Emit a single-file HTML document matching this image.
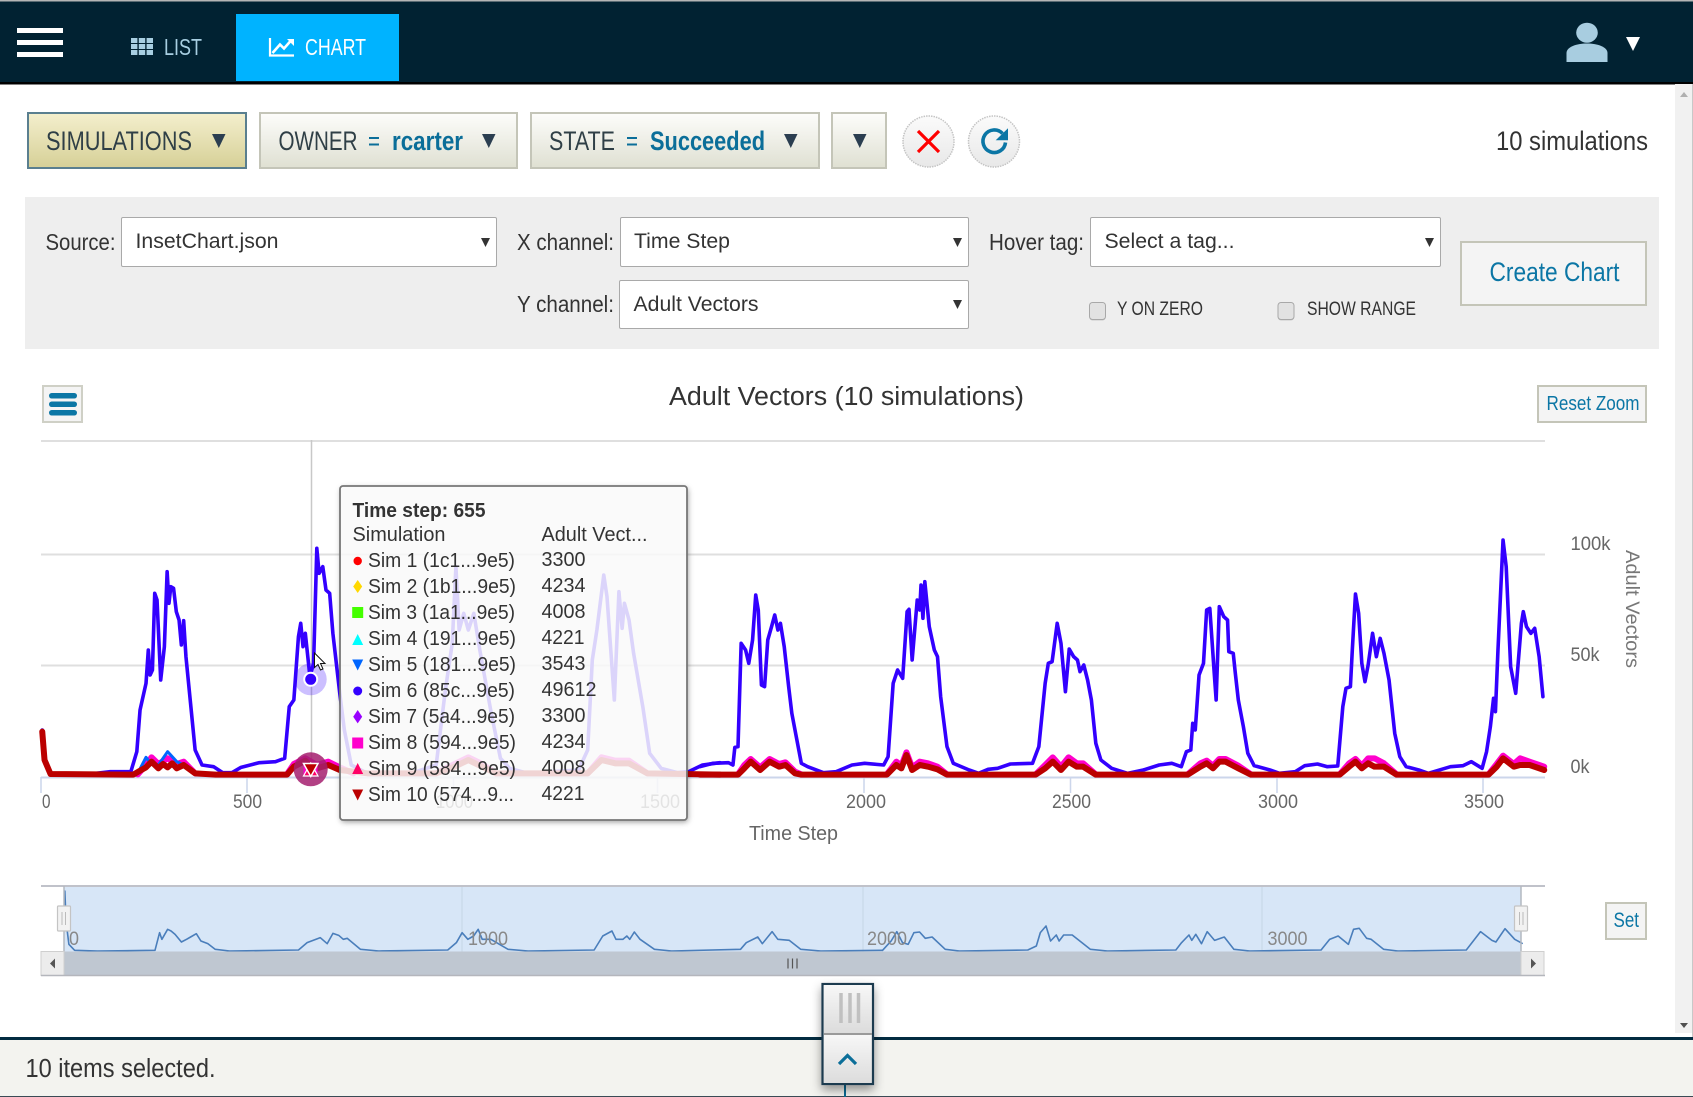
<!DOCTYPE html>
<html lang="en">
<head>
<meta charset="utf-8">
<title>Adult Vectors Chart</title>
<style>
html,body{margin:0;padding:0;background:#fff;width:1693px;height:1097px;overflow:hidden}
svg{display:block}
text{font-family:"Liberation Sans Narrow","Liberation Sans",sans-serif;fill:#333}
.nse{vector-effect:non-scaling-stroke;fill:none;stroke-linejoin:round;stroke-linecap:round}
</style>
</head>
<body>
<svg width="1693" height="1097" viewBox="0 0 1693 1097" xmlns="http://www.w3.org/2000/svg">
<defs>
<linearGradient id="gy" x1="0" y1="0" x2="0" y2="1"><stop offset="0" stop-color="#f4efcd"/><stop offset="1" stop-color="#d6d097"/></linearGradient>
<linearGradient id="gg" x1="0" y1="0" x2="0" y2="1"><stop offset="0" stop-color="#fdfdfb"/><stop offset="1" stop-color="#dfe0d2"/></linearGradient>
<linearGradient id="gc" x1="0" y1="0" x2="0" y2="1"><stop offset="0" stop-color="#fbfbfb"/><stop offset="1" stop-color="#e8e8e8"/></linearGradient>
<linearGradient id="gh" x1="0" y1="0" x2="0" y2="1"><stop offset="0" stop-color="#f7f7f7"/><stop offset="1" stop-color="#dcdcdc"/></linearGradient>
<filter id="bl" x="-20%" y="-20%" width="140%" height="140%"><feGaussianBlur stdDeviation="3"/></filter>
<filter id="sh2" x="-40%" y="-20%" width="180%" height="140%"><feDropShadow dx="0" dy="5" stdDeviation="5" flood-color="#000" flood-opacity=".4"/></filter>
<clipPath id="outTip"><path clip-rule="evenodd" d="M0 0H1693V1097H0ZM340 486H687V820H340Z"/></clipPath>
</defs>

<!-- navbar -->
<rect x="0" y="0" width="1693" height="84" fill="#012232"/>
<rect x="0" y="0" width="1693" height="1.5" fill="#b5b5b5"/>
<rect x="0" y="82" width="1693" height="2.5" fill="#000"/>
<rect x="17" y="28" width="46" height="5" fill="#fff"/><rect x="17" y="40" width="46" height="5" fill="#fff"/><rect x="17" y="52" width="46" height="5" fill="#fff"/>
<g fill="#a8cfe2">
<rect x="131" y="38" width="6.4" height="5"/><rect x="138.8" y="38" width="6.4" height="5"/><rect x="146.6" y="38" width="6.4" height="5"/>
<rect x="131" y="44" width="6.4" height="5"/><rect x="138.8" y="44" width="6.4" height="5"/><rect x="146.6" y="44" width="6.4" height="5"/>
<rect x="131" y="50" width="6.4" height="5"/><rect x="138.8" y="50" width="6.4" height="5"/><rect x="146.6" y="50" width="6.4" height="5"/>
</g>
<text x="164" y="55" font-size="23" textLength="38" lengthAdjust="spacingAndGlyphs" style="fill:#a8cfe2">LIST</text>
<rect x="236" y="14" width="163" height="67" fill="#00b3ff"/>
<path d="M270 38v17.5h24" fill="none" stroke="#fff" stroke-width="2.2"/>
<path d="M272.5 53l7.5-8.5 4 4 7-8" fill="none" stroke="#fff" stroke-width="2.6"/>
<path d="M287 39h7v7z" fill="#fff"/>
<text x="305" y="55" font-size="23" textLength="61" lengthAdjust="spacingAndGlyphs" style="fill:#fff">CHART</text>
<ellipse cx="1587" cy="32.7" rx="10.8" ry="10" fill="#a8cde0"/>
<path d="M1566.500 62v-9c0-6 10-9.500 20.500-9.500s20.500 3.500 20.500 9.500v9z" fill="#a8cde0"/>
<path d="M1626 37h14l-7 14z" fill="#fff"/>

<!-- filter row -->
<rect x="28" y="113" width="218" height="55" fill="url(#gy)" stroke="#5a7f8f" stroke-width="2"/>
<text x="46" y="150" font-size="27" textLength="146" lengthAdjust="spacingAndGlyphs" style="fill:#2f3f46">SIMULATIONS</text>
<path d="M212 134h13.500l-6.700 14z" fill="#2b3e50"/>
<rect x="260" y="113" width="257" height="55" fill="url(#gg)" stroke="#c4c5b8" stroke-width="2"/>
<text x="278.500" y="150" font-size="27" textLength="79" lengthAdjust="spacingAndGlyphs" style="fill:#2f3f46">OWNER</text>
<text x="368" y="150" font-size="27" textLength="12" lengthAdjust="spacingAndGlyphs" style="fill:#0b6e99">=</text>
<text x="392" y="150" font-size="27" font-weight="bold" textLength="71" lengthAdjust="spacingAndGlyphs" style="fill:#0b6e99">rcarter</text>
<path d="M482 134h13.500l-6.700 14z" fill="#2b3e50"/>
<rect x="531" y="113" width="288" height="55" fill="url(#gg)" stroke="#c4c5b8" stroke-width="2"/>
<text x="549" y="150" font-size="27" textLength="66" lengthAdjust="spacingAndGlyphs" style="fill:#2f3f46">STATE</text>
<text x="626" y="150" font-size="27" textLength="12" lengthAdjust="spacingAndGlyphs" style="fill:#0b6e99">=</text>
<text x="650" y="150" font-size="27" font-weight="bold" textLength="115" lengthAdjust="spacingAndGlyphs" style="fill:#0b6e99">Succeeded</text>
<path d="M784 134h13.500l-6.700 14z" fill="#2b3e50"/>
<rect x="832" y="113" width="54" height="55" fill="url(#gg)" stroke="#c4c5b8" stroke-width="2"/>
<path d="M853 134h13.500l-6.700 14z" fill="#2b3e50"/>

<circle cx="928.500" cy="141.500" r="25.500" fill="url(#gc)" stroke="#c4c4c4" stroke-width="1.500" stroke-dasharray="1.500 1"/>
<path d="M918 131l21 21M939 131l-21 21" stroke="#f00" stroke-width="3.200" fill="none"/>
<circle cx="994" cy="141.500" r="25.500" fill="url(#gc)" stroke="#c4c4c4" stroke-width="1.500" stroke-dasharray="1.500 1"/>
<path d="M1002.500 133.500a11.300 11.300 0 1 0 3 9" fill="none" stroke="#0b76a5" stroke-width="3.600"/>
<path d="M1008 128.300v12h-12.300z" fill="#0b76a5"/>
<text x="1496" y="150" font-size="27" textLength="152" lengthAdjust="spacingAndGlyphs" style="fill:#333">10 simulations</text>

<!-- control panel -->
<rect x="25" y="197" width="1634" height="152" fill="#eeeeee"/>
<text x="45.500" y="250" font-size="23.500" textLength="70" lengthAdjust="spacingAndGlyphs">Source:</text>
<rect x="121.500" y="217.500" width="375" height="49" rx="1.500" fill="#fff" stroke="#a9a9a9"/>
<text x="135.500" y="248" font-size="21.500" textLength="143" lengthAdjust="spacingAndGlyphs">InsetChart.json</text>
<path d="M481 238h9l-4.500 9z" fill="#333"/>
<text x="517" y="250" font-size="23.500" textLength="97" lengthAdjust="spacingAndGlyphs">X channel:</text>
<rect x="620.500" y="217.500" width="348" height="49" rx="1.500" fill="#fff" stroke="#a9a9a9"/>
<text x="634" y="248" font-size="21.500" textLength="96" lengthAdjust="spacingAndGlyphs">Time Step</text>
<path d="M953 238h9l-4.500 9z" fill="#333"/>
<text x="517" y="312" font-size="23.500" textLength="97" lengthAdjust="spacingAndGlyphs">Y channel:</text>
<rect x="619.500" y="280.500" width="349" height="48" rx="1.500" fill="#fff" stroke="#a9a9a9"/>
<text x="633.500" y="311" font-size="21.500" textLength="125" lengthAdjust="spacingAndGlyphs">Adult Vectors</text>
<path d="M953 300h9l-4.500 9z" fill="#333"/>
<text x="989" y="250" font-size="23.500" textLength="95" lengthAdjust="spacingAndGlyphs">Hover tag:</text>
<rect x="1090.500" y="217.500" width="350" height="49" rx="1.500" fill="#fff" stroke="#a9a9a9"/>
<text x="1104.500" y="248" font-size="21.500" textLength="130" lengthAdjust="spacingAndGlyphs">Select a tag...</text>
<path d="M1425 238h9l-4.500 9z" fill="#333"/>
<rect x="1089.500" y="303.500" width="16" height="17" rx="3" fill="#c9c9c9"/>
<rect x="1089.500" y="302.500" width="16" height="17" rx="3" fill="#e2e2e2" stroke="#a8a8a8"/>
<text x="1117" y="315" font-size="19.500" textLength="86" lengthAdjust="spacingAndGlyphs">Y ON ZERO</text>
<rect x="1278" y="303.500" width="16" height="17" rx="3" fill="#c9c9c9"/>
<rect x="1278" y="302.500" width="16" height="17" rx="3" fill="#e2e2e2" stroke="#a8a8a8"/>
<text x="1307" y="315" font-size="19.500" textLength="109" lengthAdjust="spacingAndGlyphs">SHOW RANGE</text>
<rect x="1461" y="242" width="185" height="63" fill="#f4f4f4" stroke="#c4c5b8" stroke-width="2"/>
<text x="1489.500" y="281" font-size="27" textLength="130" lengthAdjust="spacingAndGlyphs" style="fill:#0b76a5">Create Chart</text>

<!-- chart header -->
<rect x="43" y="386" width="39" height="36" fill="#f4f4f4" stroke="#cfd0c6" stroke-width="2"/>
<rect x="49" y="393" width="28" height="5.500" rx="2.700" fill="#0b76a5"/><rect x="49" y="401.500" width="28" height="5.500" rx="2.700" fill="#0b76a5"/><rect x="49" y="410" width="28" height="5.500" rx="2.700" fill="#0b76a5"/>
<text x="669" y="405" font-size="25.500" textLength="355" lengthAdjust="spacingAndGlyphs" style="fill:#333;font-family:'Liberation Sans',sans-serif">Adult Vectors (10 simulations)</text>
<rect x="1538" y="386" width="108" height="36" fill="#f4f4f4" stroke="#c4c5b8" stroke-width="2"/>
<text x="1546.500" y="410" font-size="20.500" textLength="93" lengthAdjust="spacingAndGlyphs" style="fill:#0b76a5">Reset Zoom</text>

<!-- grid -->
<g stroke="#dfdfdf" stroke-width="2">
<path d="M41 441H1545"/><path d="M41 554.500H1545"/><path d="M41 665.500H1545"/>
</g>
<path d="M41 777.500H1545" stroke="#ccd6eb" stroke-width="2"/>
<path d="M41 777v16M247 777v16M453.500 777v16M657.500 777v16M864 777v16M1070.500 777v16M1277 777v16M1483 777v16" stroke="#ccd6eb" stroke-width="1.500" fill="none"/>
<path d="M311.500 440V778" stroke="#c8c8c8" stroke-width="1.500"/>

<!-- series -->
<g transform="translate(0,430) scale(.45914,.33333)">
<g stroke="#ff00cc" stroke-width="6">
<polyline class="nse" points="300,1033 318,1005 330,982 345,1002 365,985 385,1002 400,995 425,1030"/>
<polyline class="nse" points="625,1033 640,1002 665,985 690,1005 715,995 740,1012 770,1030"/>
<polyline class="nse" points="950,1030 990,1002 1020,982 1050,1002 1080,1030"/>
<polyline class="nse" points="1280,1030 1310,982 1340,992 1370,992 1410,1030"/>
</g>
<polyline class="nse" stroke="#0066ff" stroke-width="3" points="300,1030 318,982 328,1000 345,1005 365,965 385,995 400,1005"/>
<polyline class="nse" stroke="#3300ff" stroke-width="3.600" points="92,900 97,990 108,1030 210,1030 240,1025 285,1025 298,965 305,840 318,760 323,660 327,735 332,720 337,490 342,510 350,750 358,650 364,425 368,520 372,470 378,475 384,545 390,570 395,645 400,572 405,680 415,820 425,960 440,1005 465,1010 485,1028 505,1028 525,1012 565,998 600,995 620,985 630,830 640,810 650,620 655,580 660,650 665,610 675,740 683,700 690,355 695,430 703,410 710,480 718,490 725,610 740,790 750,900 765,1005 800,1030 900,1028 950,1005 970,780 985,640 993,410 1000,600 1010,550 1020,600 1032,550 1045,660 1070,850 1090,985 1110,1015 1150,1030 1200,1025 1260,1020 1280,960 1290,690 1300,600 1315,435 1322,500 1338,810 1348,485 1355,595 1360,520 1370,570 1380,670 1400,830 1415,970 1440,1015 1475,1028 1500,1025 1530,1005 1568,998"/>
<polyline class="nse" stroke="#bb0000" stroke-width="6" points="92,905 97,990 110,1032 290,1034 305,1022 318,1012 330,995 345,1015 355,1002 365,1012 375,1000 385,1015 400,1005 425,1030 470,1034 625,1034 640,1010 665,992 680,1012 690,1015 715,1005 740,1020 800,1030 950,1030 990,1010 1020,990 1050,1010 1080,1030 1280,1030 1310,990 1340,1000 1370,1000 1410,1030 1568,1034"/>
</g>
<g transform="translate(700,500) scale(.63331,.33333)">
<g stroke="#ff00cc" stroke-width="6">
<polyline class="nse" points="60,823 70,795 80,777 95,802 110,777 125,792 135,787 150,815 160,823"/>
<polyline class="nse" points="295,823 310,785 318,797 326,757 335,802 347,785 360,790 375,800 390,823"/>
<polyline class="nse" points="530,823 545,795 557,772 570,800 582,772 595,790 605,790 625,823"/>
<polyline class="nse" points="770,823 790,790 800,782 810,797 820,777 830,777 850,797 870,823"/>
<polyline class="nse" points="1010,823 1025,790 1035,777 1045,797 1055,775 1065,775 1080,790 1100,823"/>
<polyline class="nse" points="1245,823 1258,792 1268,767 1285,792 1295,775 1310,785 1333,800"/>
</g>
<polyline class="nse" stroke="#3300ff" stroke-width="3.600" points="0,800 20,790 45,788 52,795 55,742 60,740 65,430 72,450 77,490 83,420 88,285 92,330 97,555 102,560 107,420 113,380 118,345 123,390 127,370 133,440 140,560 145,640 152,710 160,790 170,800 195,818 215,815 240,795 260,790 290,795 297,770 305,550 312,510 320,535 327,335 330,328 335,480 343,300 347,330 349,255 352,355 355,245 362,380 370,450 375,470 380,590 390,740 400,790 425,810 440,820 455,808 470,805 490,792 525,790 535,740 545,550 550,490 556,485 564,370 570,430 577,575 583,447 590,470 596,480 600,515 606,495 612,540 618,600 625,730 633,780 650,805 675,820 700,810 725,795 745,790 760,800 768,755 775,750 778,670 782,690 788,525 795,490 800,330 805,325 812,520 815,600 820,320 827,350 833,360 835,455 842,460 845,515 850,600 858,680 865,760 875,797 900,810 915,820 940,815 955,797 975,792 990,800 1007,798 1015,620 1020,565 1027,560 1030,450 1035,282 1040,340 1045,490 1050,545 1055,495 1062,400 1068,470 1074,415 1080,460 1088,540 1097,700 1105,770 1115,800 1135,810 1150,820 1185,800 1205,797 1218,785 1235,805 1242,755 1248,680 1253,595 1256,635 1260,450 1268,120 1273,200 1280,500 1288,580 1297,370 1300,335 1305,380 1312,400 1318,385 1325,470 1331,590"/>
<polyline class="nse" stroke="#bb0000" stroke-width="6" points="0,824 60,824 70,805 80,785 95,810 110,785 125,800 135,795 150,820 160,824 295,824 310,795 318,805 326,765 335,810 347,795 360,800 375,808 390,824 530,824 545,805 557,785 570,810 582,785 595,800 605,800 625,824 770,824 790,800 800,790 810,805 820,785 830,785 850,805 870,824 1010,824 1025,800 1035,785 1045,805 1055,790 1065,800 1080,800 1100,824 1245,824 1258,800 1268,775 1285,800 1295,795 1310,795 1333,810"/>
</g>

<!-- hover markers -->
<circle cx="310.700" cy="679.300" r="16" fill="#3300ff" fill-opacity=".25"/>
<circle cx="310.700" cy="679.300" r="6.500" fill="#3300ff" stroke="#fff" stroke-width="2"/>
<circle cx="310.700" cy="769.300" r="17" fill="#a51f6f" fill-opacity=".85"/>
<rect x="303.500" y="764" width="14" height="12" fill="#ff00cc"/>
<path d="M303.500 776h14.500l-7.200-13z" fill="#ff0066" stroke="#fff" stroke-width="1.200"/>
<path d="M303.500 763.500h14.500l-7.200 13z" fill="#bb0000" stroke="#fff" stroke-width="1.500"/>
<path d="M314.500 653v14.500l3.500-3 2.500 5.500 2.500-1-2.500-5.500h4.500z" fill="#fff" stroke="#111" stroke-width="1"/>

<!-- axis labels -->
<g font-size="19">
<text x="42" y="808" textLength="8.500" lengthAdjust="spacingAndGlyphs" style="fill:#666">0</text>
<text x="233" y="808" textLength="29" lengthAdjust="spacingAndGlyphs" style="fill:#666">500</text>
<text x="436" y="808" textLength="37" lengthAdjust="spacingAndGlyphs" style="fill:#666">1000</text>
<text x="640" y="808" textLength="40" lengthAdjust="spacingAndGlyphs" style="fill:#666">1500</text>
<text x="846" y="808" textLength="40" lengthAdjust="spacingAndGlyphs" style="fill:#666">2000</text>
<text x="1052" y="808" textLength="39" lengthAdjust="spacingAndGlyphs" style="fill:#666">2500</text>
<text x="1258" y="808" textLength="40" lengthAdjust="spacingAndGlyphs" style="fill:#666">3000</text>
<text x="1464" y="808" textLength="40" lengthAdjust="spacingAndGlyphs" style="fill:#666">3500</text>
<text x="1570.500" y="550" textLength="40" lengthAdjust="spacingAndGlyphs" style="fill:#666">100k</text>
<text x="1570.500" y="661" textLength="29" lengthAdjust="spacingAndGlyphs" style="fill:#666">50k</text>
<text x="1570.500" y="773" textLength="19" lengthAdjust="spacingAndGlyphs" style="fill:#666">0k</text>
</g>
<text x="749" y="840" font-size="20.500" textLength="89" lengthAdjust="spacingAndGlyphs" style="fill:#666">Time Step</text>
<text transform="translate(1626,550) rotate(90)" font-size="19" textLength="118" lengthAdjust="spacingAndGlyphs" style="fill:#777;font-family:'Liberation Sans',sans-serif">Adult Vectors</text>

<!-- tooltip -->
<g clip-path="url(#outTip)"><rect x="341" y="488" width="347" height="334" rx="3" fill="#000" fill-opacity=".4" filter="url(#bl)"/></g>
<rect x="340" y="486" width="347" height="334" rx="3" fill="#f9f9f9" fill-opacity=".85" stroke="#777" stroke-width="1.800"/>
<text x="352.500" y="517" font-size="20" font-weight="bold" textLength="133" lengthAdjust="spacingAndGlyphs">Time step: 655</text>
<text x="352.500" y="541" font-size="20" textLength="93" lengthAdjust="spacingAndGlyphs">Simulation</text>
<text x="541.500" y="541" font-size="20" textLength="106" lengthAdjust="spacingAndGlyphs">Adult Vect...</text>
<g font-size="20">
<text x="368" y="567" textLength="147" lengthAdjust="spacingAndGlyphs">Sim 1 (1c1...9e5)</text><text x="541.500" y="566" textLength="44" lengthAdjust="spacingAndGlyphs">3300</text>
<text x="368" y="593" textLength="148" lengthAdjust="spacingAndGlyphs">Sim 2 (1b1...9e5)</text><text x="541.500" y="592" textLength="44" lengthAdjust="spacingAndGlyphs">4234</text>
<text x="368" y="619" textLength="147" lengthAdjust="spacingAndGlyphs">Sim 3 (1a1...9e5)</text><text x="541.500" y="618" textLength="44" lengthAdjust="spacingAndGlyphs">4008</text>
<text x="368" y="645" textLength="148" lengthAdjust="spacingAndGlyphs">Sim 4 (191...9e5)</text><text x="541.500" y="644" textLength="43" lengthAdjust="spacingAndGlyphs">4221</text>
<text x="368" y="671" textLength="148" lengthAdjust="spacingAndGlyphs">Sim 5 (181...9e5)</text><text x="541.500" y="670" textLength="44" lengthAdjust="spacingAndGlyphs">3543</text>
<text x="368" y="697" textLength="147" lengthAdjust="spacingAndGlyphs">Sim 6 (85c...9e5)</text><text x="541.500" y="696" textLength="55" lengthAdjust="spacingAndGlyphs">49612</text>
<text x="368" y="723" textLength="147" lengthAdjust="spacingAndGlyphs">Sim 7 (5a4...9e5)</text><text x="541.500" y="722" textLength="44" lengthAdjust="spacingAndGlyphs">3300</text>
<text x="368" y="749" textLength="148" lengthAdjust="spacingAndGlyphs">Sim 8 (594...9e5)</text><text x="541.500" y="748" textLength="44" lengthAdjust="spacingAndGlyphs">4234</text>
<text x="368" y="775" textLength="148" lengthAdjust="spacingAndGlyphs">Sim 9 (584...9e5)</text><text x="541.500" y="774" textLength="44" lengthAdjust="spacingAndGlyphs">4008</text>
<text x="368" y="801" textLength="146" lengthAdjust="spacingAndGlyphs">Sim 10 (574...9...</text><text x="541.500" y="800" textLength="43" lengthAdjust="spacingAndGlyphs">4221</text>
</g>
<circle cx="357.700" cy="561" r="4.200" fill="#ff0000"/>
<path d="M357.700 580l4.500 6.500-4.500 6.500-4.500-6.500z" fill="#ffd800"/>
<rect x="352.200" y="607" width="11" height="11" fill="#44ff00"/>
<path d="M357.700 634l5.500 11h-11z" fill="#00ffff"/>
<path d="M352.200 659.500h11l-5.500 11z" fill="#0066ff"/>
<circle cx="357.700" cy="691" r="4.500" fill="#3300ff"/>
<path d="M357.700 710l4.500 6.700-4.500 6.700-4.500-6.700z" fill="#9900ff"/>
<rect x="352.200" y="737.500" width="11" height="11" fill="#ff00cc"/>
<path d="M357.700 763l5.500 11h-11z" fill="#ff0066"/>
<path d="M352.200 789.500h11l-5.500 11z" fill="#bb0000"/>

<!-- navigator -->
<rect x="64" y="886" width="1457" height="66" fill="#d7e6f7"/>
<path d="M41 886H1545" stroke="#c0c2ca" stroke-width="2"/>
<path d="M462 887v65M863 887v65M1262 887v65" stroke="#c6d5e6" stroke-width="1"/>
<g transform="translate(0,861) scale(.57405,.33333)">
<polyline class="nse" stroke="#4a7ebb" stroke-width="1.600" points="113,90 115,180 120,250 130,268 170,270 270,268 278,215 282,235 292,205 298,210 305,220 316,243 325,235 332,228 342,218 350,240 362,248 375,265 400,270 520,267 535,245 550,235 558,230 570,248 580,217 590,223 598,235 605,232 628,265 660,270 780,267 795,245 805,215 815,235 825,225 833,205 840,235 855,235 885,265 920,270 1035,267 1050,225 1066,210 1073,235 1085,235 1092,225 1097,235 1105,213 1115,235 1140,265 1170,270 1290,265 1300,245 1320,228 1328,248 1345,212 1355,235 1375,238 1395,265 1430,270 1537,268"/>
</g>
<g transform="translate(800,861) scale(.56948,.33333)">
<polyline class="nse" stroke="#4a7ebb" stroke-width="1.600" points="145,268 160,240 170,212 180,245 190,250 200,215 210,213 220,232 232,228 255,265 280,270 400,267 415,255 422,215 432,195 440,240 450,222 455,240 463,222 478,222 495,245 510,265 540,270 660,267 670,245 683,222 688,238 695,220 705,248 715,212 728,238 745,228 762,265 790,270 915,267 930,235 945,225 963,250 972,205 982,202 995,232 1003,235 1025,265 1050,270 1170,267 1195,212 1215,238 1222,243 1238,203 1255,235 1268,247"/>
</g>
<g font-size="19.500">
<text x="69" y="945" textLength="10" lengthAdjust="spacingAndGlyphs" style="fill:#888">0</text>
<text x="468" y="945" textLength="40" lengthAdjust="spacingAndGlyphs" style="fill:#888">1000</text>
<text x="867" y="945" textLength="40" lengthAdjust="spacingAndGlyphs" style="fill:#888">2000</text>
<text x="1267.500" y="945" textLength="40" lengthAdjust="spacingAndGlyphs" style="fill:#888">3000</text>
</g>
<path d="M64 886v66M1521 886v66" stroke="#b4b8c0" stroke-width="1.500"/>
<rect x="64" y="951.500" width="1457" height="24" fill="#bfc7d1"/>
<rect x="41" y="951.500" width="23" height="24" fill="#ececec" stroke="#cfcfcf"/>
<rect x="1521" y="951.500" width="23" height="24" fill="#ececec" stroke="#cfcfcf"/>
<path d="M41 975.500H1545" stroke="#b4b6bc" stroke-width="1.500"/>
<path d="M55 958.500v10l-5-5z" fill="#555"/><path d="M1531 958.500v10l5-5z" fill="#555"/>
<path d="M788 958.500v10M792.500 958.500v10M797 958.500v10" stroke="#555" stroke-width="1.200"/>
<rect x="57.500" y="906" width="13" height="25" rx="1" fill="#f2f2f2" stroke="#c4c4c4" stroke-width="1.200"/>
<path d="M62 912v13M65.500 912v13" stroke="#bbb"/>
<rect x="1514.500" y="906" width="13" height="25" rx="1" fill="#f2f2f2" stroke="#c4c4c4" stroke-width="1.200"/>
<path d="M1519.500 912v13M1523 912v13" stroke="#bbb"/>
<rect x="1606" y="903" width="40" height="36" fill="#f4f4f4" stroke="#c4c5b8" stroke-width="2"/>
<text x="1613.500" y="927" font-size="21.500" textLength="25.500" lengthAdjust="spacingAndGlyphs" style="fill:#0b76a5">Set</text>

<!-- scrollbar -->
<rect x="1675" y="84" width="18" height="949" fill="#f1f1f1"/>
<rect x="1692" y="84" width="1" height="1013" fill="#c8c8c8"/>
<path d="M1680 97h8l-4-5z" fill="#b0b0b0"/><path d="M1680 1023h8l-4 5z" fill="#505050"/>

<!-- footer -->
<rect x="0" y="1040" width="1693" height="57" fill="#f3f3ef"/>
<rect x="0" y="1037" width="1693" height="3" fill="#022b40"/>
<rect x="0" y="1096" width="1693" height="1" fill="#3a4a55"/>
<text x="25.500" y="1077" font-size="25.500" textLength="190" lengthAdjust="spacingAndGlyphs" style="fill:#333">10 items selected.</text>
<path d="M845 1084v13" stroke="#0b6a94" stroke-width="2"/>
<g filter="url(#sh2)">
<rect x="822.500" y="984" width="50.500" height="100" fill="url(#gh)" stroke="#1f3a50" stroke-width="2.200"/>
</g>
<rect x="824" y="985" width="47.500" height="48" fill="url(#gh)"/>
<rect x="824" y="1035" width="47.500" height="48" fill="url(#gh)"/>
<path d="M824 1034H872" stroke="#9a9a9a" stroke-width="2"/>
<path d="M841 993v30M850 993v30M858.500 993v30" stroke="#c0c0c0" stroke-width="3.500"/>
<path d="M839 1064l8.500-8.500 8.500 8.500" fill="none" stroke="#0b6e99" stroke-width="3.200"/>
</svg>
</body>
</html>
